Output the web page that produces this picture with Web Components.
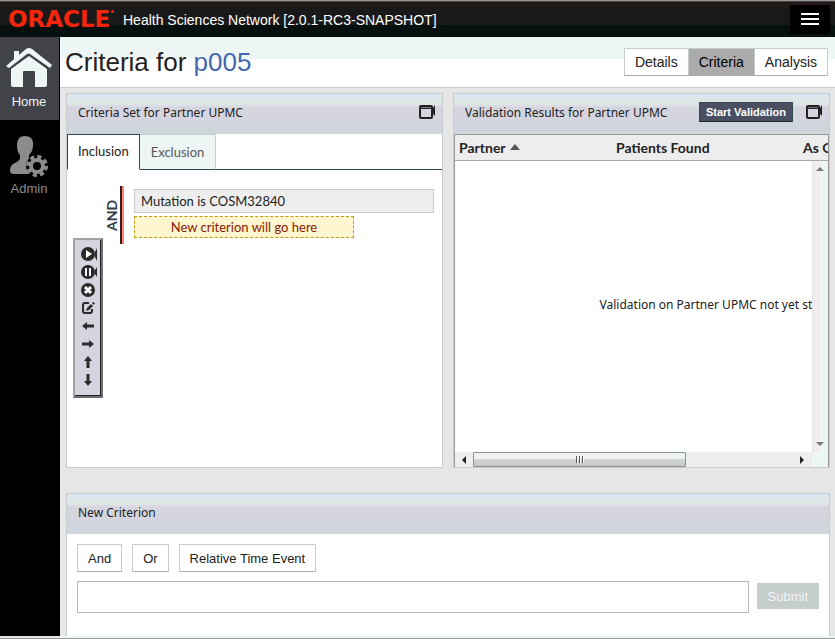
<!DOCTYPE html>
<html lang="en">
<head>
<meta charset="utf-8">
<title>Health Sciences Network</title>
<style>
  html, body { margin: 0; height: 100%; }
  body {
    --ui: "Liberation Sans", Arial, sans-serif;
    --body: "Noto Sans", "Open Sans", sans-serif;
    --list: Lato, "Noto Sans", sans-serif;
    --line: #c5cdcd;
    font-family: var(--ui);
    font-size: 14px;
    color: #222;
    background: #e6e6e6;
  }
</style>
</head>
<body>
<hsn-app>
  <hsn-header slot="header" version="2.0.1-RC3-SNAPSHOT"></hsn-header>
  <hsn-nav slot="nav"></hsn-nav>
  <hsn-title slot="title" study="p005"></hsn-title>
  <hsn-panel slot="top" label="Criteria Set for Partner UPMC" expandable>
    <hsn-criteria></hsn-criteria>
  </hsn-panel>
  <hsn-panel slot="top" label="Validation Results for Partner UPMC" action="Start Validation" expandable>
    <hsn-results></hsn-results>
  </hsn-panel>
  <hsn-panel slot="bottom" label="New Criterion">
    <hsn-new-criterion></hsn-new-criterion>
  </hsn-panel>
</hsn-app>

<script>
class HsnElement extends HTMLElement {
  constructor() {
    super();
    this.attachShadow({ mode: "open" });
  }

  connectedCallback() {
    this.shadowRoot.innerHTML = `
      <style>
        * { box-sizing: border-box; }
        h1, h2, button, input { margin: 0; padding: 0; }
        :host { display: block; box-sizing: border-box; }
        button { font: inherit; color: inherit; cursor: pointer; }
      </style>
      ${this.render()}`;
  }
}

class HsnApp extends HsnElement {
  render() {
    return `
      <style>
        :host {
          display: grid;
          grid-template: auto 1fr / 60px 1fr;
          min-height: 100vh;
          border-bottom: 1px solid #999;
        }
        .header { grid-column: 1 / 3; }
        .nav { display: flex; margin-bottom: 2px; background: #000; }
        main { min-width: 0; display: flex; flex-direction: column; border-bottom: 2px solid #edf6f5; }
        .top {
          display: grid;
          grid-template-columns: 1fr 1fr;
          gap: 10px;
          padding: 5px 5px 25px 6px;
        }
        .bottom { flex: 1; display: flex; padding: 0 5px 0 6px; }
        ::slotted(hsn-panel) { min-width: 0; flex: 1; }
        .bottom ::slotted(hsn-panel) { border-bottom: 0; }
      </style>
      <div class="header"><slot name="header"></slot></div>
      <div class="nav"><slot name="nav"></slot></div>
      <main>
        <slot name="title"></slot>
        <div class="top"><slot name="top"></slot></div>
        <div class="bottom"><slot name="bottom"></slot></div>
      </main>`;
  }
}

class HsnHeader extends HsnElement {
  render() {
    return `
      <style>
        :host {
          display: flex;
          align-items: center;
          height: 37px;
          padding: 0 5px 0 8px;
          border-top: 1px solid #999;
          color: #fff;
          background: linear-gradient(#444 1px, #231a17 1px 6px, #191919 6px 24px, #06100f 24px);
        }
        .logo {
          display: flex;
          gap: 1px;
          width: 115px;
          font: bold 23px/24px "DejaVu Sans", sans-serif;
          color: #f8250d;
          white-space: nowrap;
        }
        .logo svg { margin-top: 3px; }
        .name { flex: 1; line-height: 20px; padding-top: 2px; }
        button {
          display: grid;
          place-items: center;
          width: 40px;
          height: 29px;
          border: 0;
          background: #000;
        }
      </style>
      <span class="logo">ORACLE<svg width="3" height="3"><circle cx="1.5" cy="1.5" r="1.5" fill="#f8250d"/></svg></span>
      <span class="name">Health Sciences Network [${this.getAttribute("version")}]</span>
      <button aria-label="Menu">
        <svg width="18" height="12" viewBox="0 0 18 12" fill="#fff">
          <path d="M0 0h18v2H0zM0 5h18v2H0zM0 10h18v2H0z"/>
        </svg>
      </button>`;
  }
}

class HsnNav extends HsnElement {
  render() {
    return `
      <style>
        :host { flex: 1; }
        a {
          display: flex;
          flex-direction: column;
          align-items: center;
          gap: 4px;
          height: 83px;
          padding: 11px 2px 0 0;
          font-size: 13px;
          line-height: 20px;
          color: #8c8c8c;
          text-decoration: none;
        }
        a.on { margin-right: 1px; padding-right: 1px; background: #424249; color: #edf6f5; }
        a:not(.on) { padding-top: 15px; gap: 2px; }
      </style>
      <nav>
        <a class="on" href="#home">
          <svg width="46" height="40" viewBox="0 0 46 40" fill="#edf6f5">
            <path d="M0 18 L20 1 Q23 -1 26 1 L46 17 L44 20 L24 6 Q23 5 21 6 L3 20 Z"/>
            <path d="M8 3h5v5l-5 4z"/>
            <path d="M5 21 L23 8 L41 21 V37 Q41 39 39 39 H29 V24 Q29 23 28 23 H18 Q17 23 17 24 V39 H7 Q5 39 5 37 Z"/>
          </svg>
          Home
        </a>
        <a href="#admin">
          <svg width="40" height="42" viewBox="0 0 40 42">
            <path fill="#8c8c8c" d="M16 1c6 0 9 4 8 10-.5 5-2 7-4 9v3c0 3 4 3 8 6v10H6c-4 0-5-1-5-4 0-8 10-7 10-12v-3c-2-2-3-5-3-9C8 5 10 1 16 1z"/>
            <circle cx="28" cy="31" r="11" fill="#000"/>
            <circle cx="28" cy="31" r="6" fill="none" stroke="#8c8c8c" stroke-width="4"/>
            <circle cx="28" cy="31" r="9" fill="none" stroke="#8c8c8c" stroke-width="4" stroke-dasharray="4 3.07"/>
          </svg>
          Admin
        </a>
      </nav>`;
  }
}

class HsnTitle extends HsnElement {
  render() {
    return `
      <style>
        :host {
          display: flex;
          justify-content: space-between;
          align-items: center;
          height: 51px;
          padding: 0 7px 0 5px;
          border-bottom: 1px solid #ccc;
          background: linear-gradient(#edf6f5 22px, #fff 22px);
        }
        h1 { font-size: 26px; line-height: 30px; font-weight: normal; white-space: nowrap; }
        a { color: #4268b0; text-decoration: none; }
        .views { display: flex; border: 1px solid var(--line); border-bottom-color: #aaa; }
        button { height: 26px; padding: 0 10px; border: 0; background: #fff; }
        button.on { background: #ababab; color: #000; border: solid var(--line); border-width: 0 1px; }
      </style>
      <h1>Criteria for <a href="#study">${this.getAttribute("study")}</a></h1>
      <div class="views">
        <button>Details</button><button class="on">Criteria</button><button>Analysis</button>
      </div>`;
  }
}

class HsnPanel extends HsnElement {
  render() {
    const action = this.getAttribute("action");
    return `
      <style>
        :host {
          display: flex;
          flex-direction: column;
          border: 1px solid var(--line);
          background: #fff;
        }
        header {
          display: flex;
          align-items: center;
          height: 40px;
          padding: 0 7px 4px 11px;
          background: linear-gradient(#dde5ee 4px, #dce6e5 4px 11px, #dcdbe4 11px 13px, #d5d5df 13px 27px, #ced5dd 27px);
        }
        h2 { flex: 1; padding-top: 2px; font: 12px/18px var(--body); white-space: nowrap; }
        .action {
          height: 20px;
          margin-right: 13px;
          padding: 0 6px;
          border: 1px solid #334a59;
          border-bottom-color: #222a38;
          background: #4a5062;
          color: #fff;
          font-size: 11px;
          font-weight: bold;
          white-space: nowrap;
        }
        .expand { display: flex; border: 0; background: none; }
        .content { flex: 1; min-height: 0; }
      </style>
      <header>
        <h2>${this.getAttribute("label")}</h2>
        ${action ? `<button class="action">${action}</button>` : ""}
        ${this.hasAttribute("expandable") ? `
        <button class="expand" aria-label="Expand panel">
          <svg width="16" height="14" viewBox="0 0 16 14">
            <rect x="1" y="1" width="12" height="12" rx="1" fill="none" stroke="#222" stroke-width="2"/>
            <path fill="#222" d="M1 1h12v3H1zM14 3l2-3v11l-2-2z"/>
            <path fill="#777" d="M2 2h10v1H2z"/>
          </svg>
        </button>` : ""}
      </header>
      <div class="content"><slot></slot></div>`;
  }
}

class HsnCriteria extends HsnElement {
  render() {
    return `
      <style>
        :host { font: 13px/18px var(--list); height: 333px; }
        .tabs { display: flex; height: 36px; border-bottom: 1px solid #2f4850; }
        .tabs button { height: 36px; padding: 0 10px; border: 1px solid #2f4850; }
        .tabs .on { padding-bottom: 3px; border-bottom-color: #fff; background: #fff; }
        .tabs .off { padding: 0 11px; border-color: var(--line) var(--line) #2f4850; border-left: 0; background: #edf6f5; color: #555; }
        .area { display: flex; align-items: flex-start; padding: 16px 8px 0 6px; }
        .op {
          height: 58px;
          width: 21px;
          border-right: 2px solid #ff8577;
          box-shadow: inset -2px 0 #3b1a18;
          margin-right: 10px;
          padding-right: 2px;
          writing-mode: vertical-rl;
          font: bold 14px/16px var(--list);
          color: #333a48;
          text-align: center;
        }
        .op span { display: block; transform: rotate(180deg); }
        .rules { flex: 1; padding-top: 3px; }
        .rule { height: 24px; padding: 2px 6px; border: 1px solid #ccc; background: #eee; white-space: nowrap; }
        .drop {
          width: 220px;
          height: 22px;
          margin-top: 3px;
          padding-top: 1px;
          border: 1px dashed #c09a10;
          background: #fff5ce;
          color: #8b1a00;
          text-align: center;
        }
      </style>
      <div class="tabs" role="tablist">
        <button class="on" role="tab">Inclusion</button>
        <button class="off" role="tab">Exclusion</button>
      </div>
      <div class="area">
        <hsn-palette></hsn-palette>
        <div class="op"><span>AND</span></div>
        <div class="rules">
          <div class="rule">Mutation is COSM32840</div>
          <div class="drop">New criterion will go here</div>
        </div>
      </div>`;
  }
}

class HsnPalette extends HsnElement {
  render() {
    const arrow = turn => `<path transform="rotate(${turn} 8 8)" d="M2 8l5-4v2.5h7v3H7V12z"/>`;
    const icons = {
      "Run": '<circle cx="8" cy="8" r="7"/><path fill="#fff" d="M6 4l6 4-6 4z"/><path d="M15 6l2-4v13l-2-4z"/>',
      "Pause": '<circle cx="8" cy="8" r="7"/><path fill="#fff" d="M5 4h2v8H5zM9 4h2v8H9z"/><path d="M15 6l2-3v10l-2-3z"/>',
      "Delete": '<circle cx="8" cy="8" r="7"/><path stroke="#fff" stroke-width="3" d="M5 5l6 6M11 5l-6 6"/>',
      "Edit": '<path fill="none" stroke="#2a2a2a" stroke-width="2" d="M9 3H5Q3 3 3 5v6q0 2 2 2h5q2 0 2-2V9"/><path d="M6 11l1-3 4-4 2 2-4 4zM12 3l1-1 2 1-1 2z"/>',
      "Move left": arrow(0),
      "Move right": arrow(180),
      "Move up": arrow(90),
      "Move down": arrow(270)
    };
    return `
      <style>
        :host {
          width: 30px;
          margin-top: 52px;
          padding: 6px 0 6px 5px;
          border: 2px solid #a3a3a3;
          border-right-color: #6b6f76;
          border-bottom-color: #6b6f76;
          box-shadow: inset -1px -1px #222;
          background: #d5d5df;
        }
        button { display: block; width: 18px; height: 18px; border: 0; background: none; }
        svg { display: block; }
      </style>
      ${Object.keys(icons).map(name => `
        <button aria-label="${name}"><svg width="18" height="18" viewBox="0 0 18 18" fill="#2a2a2a">${icons[name]}</svg></button>`).join("")}`;
  }
}

class HsnResults extends HsnElement {
  render() {
    return `
      <style>
        :host {
          display: grid;
          grid-template: 26px 1fr 15px / 1fr 16px;
          height: 333px;
          border: solid #999;
          border-width: 1px 1px 0;
          font: 14px/18px var(--list);
        }
        .view { grid-area: 1 / 1 / 3 / 3; overflow: hidden; }
        table { width: 532px; height: 100%; border-collapse: collapse; table-layout: fixed; }
        th {
          height: 26px;
          padding: 0 4px;
          background: #ededed;
          box-shadow: inset 0 -1px #aaa;
          text-align: left;
          white-space: nowrap;
        }
        td { padding: 0 0 4px; text-align: center; white-space: nowrap; font: 12px/18px var(--body); }
        th svg { margin-left: 1px; vertical-align: 2px; }
        .vbar, .hbar { display: flex; justify-content: space-between; align-items: center; }
        .vbar {
          grid-area: 2 / 2;
          z-index: 1;
          flex-direction: column;
          padding: 6px 0 5px;
          background: linear-gradient(90deg, #e6e6e6 1px, #efeded 1px 8px, #edf6f5 8px);
        }
        .hbar { grid-area: 3 / 1; padding: 0 7px; background: #eee; }
        .thumb {
          display: flex;
          justify-content: center;
          gap: 1px;
          width: 213px;
          height: 15px;
          margin: 0 auto 0 6px;
          padding-top: 3px;
          border: 1px solid #8f8f8f;
          border-radius: 1px;
          background: linear-gradient(#edf3f2 6px, #d5d5d5 6px, #c6c6c6);
        }
        .thumb i { width: 2px; height: 7px; background: linear-gradient(90deg, #555 1px, #fff 1px); }
        .corner { grid-area: 3 / 2; background: #edf6f5; }
      </style>
      <div class="view">
        <table>
          <colgroup><col width="157"><col width="187"><col width="188"></colgroup>
          <thead>
            <tr>
              <th>Partner <svg width="10" height="7"><path fill="#555" d="M5 0l5 6H0z"/></svg></th>
              <th>Patients Found</th>
              <th>As Of</th>
            </tr>
          </thead>
          <tbody><tr><td colspan="3">Validation on Partner UPMC not yet started</td></tr></tbody>
        </table>
      </div>
      <div class="vbar">
        <svg width="8" height="5"><path fill="#777" d="M4 0l4 4H0z"/></svg>
        <svg width="8" height="5"><path fill="#777" d="M0 0h8L4 4z"/></svg>
      </div>
      <div class="hbar">
        <svg width="5" height="8"><path fill="#222" d="M4 0v8L0 4z"/></svg>
        <div class="thumb"><i></i><i></i><i></i></div>
        <svg width="5" height="8"><path fill="#222" d="M0 0l4 4-4 4z"/></svg>
      </div>
      <div class="corner"></div>`;
  }
}

class HsnNewCriterion extends HsnElement {
  render() {
    return `
      <style>
        :host { padding: 10px; font-size: 13px; }
        .ops, form { display: flex; gap: 10px; }
        .ops { margin-bottom: 9px; }
        .ops button {
          height: 28px;
          padding: 0 10px;
          border: 1px solid var(--line);
          border-bottom-color: #aaa;
          background: #fff;
        }
        form { gap: 8px; }
        input { flex: 1; min-width: 0; height: 32px; padding: 0 6px; border: 1px solid #b8b8b8; font: inherit; }
        .submit {
          height: 26px;
          margin-top: 2px;
          padding: 0 11px;
          border: 0;
          background: #c5cdcd;
          color: #f4f4f4;
        }
      </style>
      <div class="ops">
        <button>And</button><button>Or</button><button>Relative Time Event</button>
      </div>
      <form>
        <input type="text" aria-label="New criterion">
        <button class="submit" type="button">Submit</button>
      </form>`;
  }
}

customElements.define("hsn-app", HsnApp);
customElements.define("hsn-header", HsnHeader);
customElements.define("hsn-nav", HsnNav);
customElements.define("hsn-title", HsnTitle);
customElements.define("hsn-panel", HsnPanel);
customElements.define("hsn-criteria", HsnCriteria);
customElements.define("hsn-palette", HsnPalette);
customElements.define("hsn-results", HsnResults);
customElements.define("hsn-new-criterion", HsnNewCriterion);
</script>
</body>
</html>
